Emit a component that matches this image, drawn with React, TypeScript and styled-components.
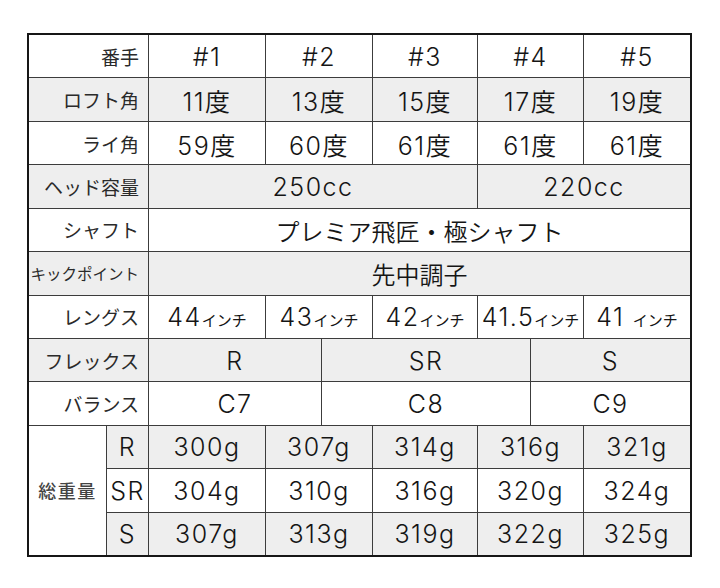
import React from 'react';
import styled, { createGlobalStyle } from 'styled-components';

const GlobalStyle = createGlobalStyle`
  html, body {
    margin: 0;
    padding: 0;
    background: #ffffff;
  }
  body {
    font-family: "Noto Sans CJK JP", "Noto Sans", sans-serif;
  }
`;

const Page = styled.div`
  padding: 33px 0 0 27px;
`;

// grid tracks follow every line in the chart: label split, then the value columns
// (#2 and #4 are split in two so the flex / balance spans can fall between them)
const Table = styled.div`
  box-sizing: border-box;
  width: 665px;
  height: 524px;
  border: 2px solid #161616;
  background: #3c3c3c;
  display: grid;
  grid-template-columns: 77px 41px 116px 55px 50px 104px 52px 52px 106px;
  grid-template-rows: repeat(12, 1fr);
  gap: 1px;
`;

interface CellProps {
    $shade?: boolean;
    $span?: number;
    $rows?: number;
}

const Cell = styled.div<CellProps>`
    background: ${(p) => (p.$shade ? '#eeeeee' : '#ffffff')};
    grid-column: span ${(p) => p.$span ?? 1};
    grid-row: span ${(p) => p.$rows ?? 1};
    display: flex;
    align-items: center;
    white-space: nowrap;
    overflow: hidden;
    color: #1c1c1c;
`;

const Label = styled(Cell)<{ $small?: boolean }>`
    justify-content: flex-end;
    padding-right: 9px;
    font-size: ${(p) => (p.$small ? 15.5 : 19)}px;
    color: #2a2a2a;
`;

const GroupLabel = styled(Cell)`
    justify-content: center;
    font-size: 18px;
    font-weight: 500;
    color: #444;
    letter-spacing: 1.5px;
`;

const Value = styled(Cell)<{ $jp?: boolean }>`
    justify-content: center;
    font-family: "Inter", "Noto Sans CJK JP", sans-serif;
    font-size: ${(p) => (p.$jp ? 24 : 25)}px;
    font-weight: 350;
    color: #151515;
    letter-spacing: ${(p) => (p.$jp ? 0 : 1.5)}px;
    padding-top: 1px;
`;

const Unit = styled.span`
    font-family: "Noto Sans CJK JP", sans-serif;
    font-size: 15px;
    font-weight: 400;
    letter-spacing: 0;
    margin-top: 4px;
`;

type Span = [string, number];

const numbers: Span[] = [['#1', 1], ['#2', 2], ['#3', 1], ['#4', 2], ['#5', 1]];
const lofts: Span[] = [['11度', 1], ['13度', 2], ['15度', 1], ['17度', 2], ['19度', 1]];
const lies: Span[] = [['59度', 1], ['60度', 2], ['61度', 1], ['61度', 2], ['61度', 1]];
const lengths: Span[] = [['44', 1], ['43', 2], ['42', 1], ['41.5', 2], ['41\u00a0', 1]];

const weights = [
    { flex: 'R', values: ['300g', '307g', '314g', '316g', '321g'] },
    { flex: 'SR', values: ['304g', '310g', '316g', '320g', '324g'] },
    { flex: 'S', values: ['307g', '313g', '319g', '322g', '325g'] },
];
const spans = [1, 2, 1, 2, 1];

function SpanRow({ label, cells, shade, unit }: { label: string; cells: Span[]; shade?: boolean; unit?: string }) {
    return (
        <>
            <Label $span={2} $shade={shade}>
                {label}
            </Label>
            {cells.map(([text, span], i) => (
                <Value key={i} $span={span} $shade={shade}>
                    {text}
                    {unit && <Unit>{unit}</Unit>}
                </Value>
            ))}
        </>
    );
}

export default function App() {
    return (
        <>
            <GlobalStyle />
            <Page>
                <Table>
                    <SpanRow label="番手" cells={numbers} />
                    <SpanRow label="ロフト角" cells={lofts} shade />
                    <SpanRow label="ライ角" cells={lies} />
                    <SpanRow label="ヘッド容量" cells={[['250cc', 4], ['220cc', 3]]} shade />
                    <Label $span={2}>シャフト</Label>
                    <Value $span={7} $jp>
                        プレミア飛匠・極シャフト
                    </Value>
                    <Label $span={2} $shade $small>
                        キックポイント
                    </Label>
                    <Value $span={7} $shade $jp>
                        先中調子
                    </Value>
                    <SpanRow label="レングス" cells={lengths} unit="インチ" />
                    <SpanRow label="フレックス" cells={[['R', 2], ['SR', 3], ['S', 2]]} shade />
                    <SpanRow label="バランス" cells={[['C7', 2], ['C8', 3], ['C9', 2]]} />
                    <GroupLabel $rows={3}>総重量</GroupLabel>
                    {weights.map((row, r) => (
                        <React.Fragment key={row.flex}>
                            <Value $shade={r !== 1}>{row.flex}</Value>
                            {row.values.map((v, i) => (
                                <Value key={i} $span={spans[i]} $shade={r !== 1}>
                                    {v}
                                </Value>
                            ))}
                        </React.Fragment>
                    ))}
                </Table>
            </Page>
        </>
    );
}
